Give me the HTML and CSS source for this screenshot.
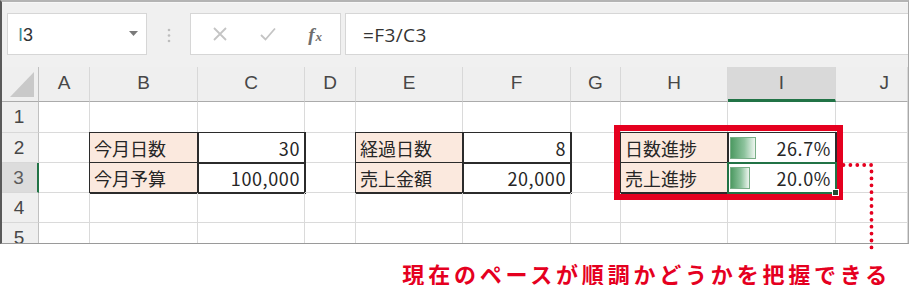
FILE: index.html
```html
<!DOCTYPE html>
<html lang="ja">
    <head>
        <meta charset="UTF-8">
        <title>進捗率のデータバー</title>
        <link rel="stylesheet" href="styles.css">
    </head>
    <body>
        <div class="shot">
            <div class="frame">
                <!-- formula bar -->
                <div class="toolbar">
                    <div class="namebox">
                        <span class="ref"><span class="ref-col">I</span>3</span>
                        <svg class="drop" width="9" height="5" viewBox="0 0 9 5"><path d="M0 0H9L4.5 5Z" fill="#7a7a7a"/></svg>
                    </div>
                    <svg class="grip" width="4" height="18" viewBox="0 0 4 18">
                        <circle cx="2" cy="2" r="1.3" fill="#bdbdbd"/>
                        <circle cx="2" cy="7.5" r="1.3" fill="#bdbdbd"/>
                        <circle cx="2" cy="13" r="1.3" fill="#bdbdbd"/>
                    </svg>
                    <div class="fxbox">
                        <svg width="14" height="14" viewBox="0 0 14 14"><path d="M1 1L13 13M13 1L1 13" stroke="#c4c4c4" stroke-width="1.8" fill="none"/></svg>
                        <svg width="16" height="14" viewBox="0 0 16 14"><path d="M1 8L5.5 12.5L15 1.5" stroke="#c4c4c4" stroke-width="1.8" fill="none"/></svg>
                        <span class="fx">f<span class="fx-x">x</span></span>
                    </div>
                    <div class="formula">=F3/C3</div>
                </div>

                <!-- sheet -->
                <div class="grid">
                    <div class="hd corner"><svg width="24" height="25" viewBox="0 0 24 25"><path d="M24 0V25H0Z" fill="#c9c9c9"/></svg></div>
                    <div class="hd">A</div>
                    <div class="hd">B</div>
                    <div class="hd">C</div>
                    <div class="hd">D</div>
                    <div class="hd">E</div>
                    <div class="hd">F</div>
                    <div class="hd">G</div>
                    <div class="hd">H</div>
                    <div class="hd hd-sel">I</div>
                    <div class="hd hd-last">J</div>

                    <div class="rh">1</div>
                    <div class="c"></div><div class="c"></div><div class="c"></div><div class="c"></div><div class="c"></div>
                    <div class="c"></div><div class="c"></div><div class="c"></div><div class="c"></div><div class="c"></div>

                    <div class="rh">2</div>
                    <div class="c"></div>
                    <div class="c box label">今月日数</div>
                    <div class="c box num">30</div>
                    <div class="c"></div>
                    <div class="c box label">経過日数</div>
                    <div class="c box num">8</div>
                    <div class="c"></div>
                    <div class="c box label">日数進捗</div>
                    <div class="c box num bar-cell"><span class="bar" style="width: 26px"></span><span>26.7%</span></div>
                    <div class="c"></div>

                    <div class="rh rh-sel">3</div>
                    <div class="c"></div>
                    <div class="c box label">今月予算</div>
                    <div class="c box num">100,000</div>
                    <div class="c"></div>
                    <div class="c box label">売上金額</div>
                    <div class="c box num">20,000</div>
                    <div class="c"></div>
                    <div class="c box label">売上進捗</div>
                    <div class="c box num bar-cell sel"><span class="bar" style="width: 20px"></span><span>20.0%</span></div>
                    <div class="c"></div>

                    <div class="rh">4</div>
                    <div class="c"></div><div class="c"></div><div class="c"></div><div class="c"></div><div class="c"></div>
                    <div class="c"></div><div class="c"></div><div class="c"></div><div class="c"></div><div class="c"></div>

                    <div class="rh">5</div>
                    <div class="c"></div><div class="c"></div><div class="c"></div><div class="c"></div><div class="c"></div>
                    <div class="c"></div><div class="c"></div><div class="c"></div><div class="c"></div><div class="c"></div>
                </div>
            </div>

            <!-- annotation -->
            <div class="mark"></div>
            <svg class="leader" width="40" height="100" viewBox="0 0 40 100">
                <path d="M3.5 5H31.5V92" stroke="#e5001f" stroke-width="3.8" stroke-linecap="round" stroke-dasharray="0 6.9" fill="none"/>
            </svg>
            <p class="caption">現在のペースが順調かどうかを把握できる</p>
        </div>
    </body>
</html>
```

FILE: styles.css
```css
body{
    margin: 0;
    background: #fff;
    font-family: "Noto Sans CJK JP", "Liberation Sans", sans-serif;
}
.shot{
    position: relative;
    width: 911px;
}
.frame{
    width: 906px;
    height: 241px;
    border-top: 2px solid #b4b4b4;
    border-left: 2px solid #5a5a5a;
    border-right: 1px solid #a8a8a8;
    border-bottom: 1px solid #9a9a9a;
    background: #f0f0f0;
    overflow: hidden;
}

/* formula bar */
.toolbar{
    display: flex;
    align-items: flex-start;
    height: 65px;
    padding-top: 10px;
    box-sizing: border-box;
    border-top: 1px solid #f7f7f7;
}
.namebox, .fxbox, .formula{
    height: 42px;
    box-sizing: border-box;
    background: #fff;
    border: 1px solid #d6d6d6;
    display: flex;
    align-items: center;
}
.namebox{
    width: 140px;
    margin-left: 5px;
    padding: 0 8px 0 10px;
    justify-content: space-between;
}
.ref{
    font: 18px "Liberation Sans", sans-serif;
    color: #333;
    padding-top: 3px;
}
.ref-col{
    color: #3a8c9e;
}
.drop{
    margin-bottom: 2px;
}
.grip{
    margin: 15px 19px 0 20px;
}
.fxbox{
    width: 151px;
    padding: 0 18px 0 22px;
    justify-content: space-between;
}
.fx{
    font: italic bold 19px "Liberation Serif", serif;
    color: #6e6e6e;
    padding-top: 2px;
}
.fx-x{
    font-size: 13px;
    margin-left: 1px;
}
.formula{
    flex: 1;
    margin-left: 4px;
    margin-right: -1px;
    padding: 2px 0 0 17px;
    font: 19px "Open Sans", "Liberation Sans", sans-serif;
    letter-spacing: .4px;
    color: #333;
}

/* sheet */
.grid{
    display: grid;
    grid-template-columns: 37px 51px 108px 107px 51px 107px 108px 50px 107px 108px 1fr;
    grid-template-rows: 35px 31px 30px 30px 30px 30px;
    background: #fff;
    font-size: 18px;
    color: #262626;
}
.hd, .rh{
    background: #efefef;
    color: #474747;
    display: flex;
    align-items: center;
    justify-content: center;
    box-sizing: border-box;
    font-family: "Liberation Sans", sans-serif;
    font-size: 19px;
}
.hd{
    border-right: 1px solid #d8d8d8;
    border-bottom: 1px solid #ababab;
    padding-bottom: 2px;
}
.hd-last{
    justify-content: flex-end;
    padding-right: 18px;
}
.corner{
    justify-content: flex-end;
    align-items: flex-end;
    padding: 0 4px 4px 0;
    border-right-color: #c0c0c0;
}
.hd-sel{
    background: #d9d9d9;
    border-bottom: 3px solid #217346;
    padding-bottom: 0;
}
.rh{
    border-right: 1px solid #c0c0c0;
    border-bottom: 1px solid #d8d8d8;
    padding-right: 2px;
}
.rh-sel{
    background: #dcdcdc;
    color: #5c5c5c;
    border-right: 2px solid #217346;
}
.c{
    border-right: 1px solid #dadada;
    border-bottom: 1px solid #dadada;
    box-sizing: border-box;
    display: flex;
    align-items: center;
    padding: 0 4px;
    white-space: nowrap;
}
.box{
    border-right-color: #2b2b2b;
    border-bottom-color: #2b2b2b;
    outline: 1px solid #2b2b2b;
}
.label{
    background: #fbe9de;
}
.num{
    justify-content: flex-end;
    letter-spacing: .6px;
}
.bar-cell{
    justify-content: space-between;
    padding-left: 2px;
}
.bar{
    height: 22px;
    box-sizing: border-box;
    border: 1px solid #79ae87;
    background: linear-gradient(to right, #4d9a62, #8cc29c 55%, #eef6f0);
}
.sel{
    position: relative;
    outline: 2px solid #217346;
    outline-offset: -1px;
    z-index: 1;
}
.sel::after{
    content: "";
    position: absolute;
    right: -4px;
    bottom: -4px;
    width: 5px;
    height: 5px;
    background: #1f4f33;
    border: 1px solid #fff;
}

/* annotation */
.mark{
    position: absolute;
    left: 614px;
    top: 125px;
    width: 229px;
    height: 75px;
    box-sizing: border-box;
    border: 6px solid #e5001f;
}
.leader{
    position: absolute;
    left: 840px;
    top: 160px;
}
.caption{
    margin: 17px 0 0;
    padding-right: 20px;
    text-align: right;
    font-size: 22px;
    line-height: 24px;
    font-weight: 700;
    letter-spacing: 3.8px;
    color: #e5001f;
}
```
